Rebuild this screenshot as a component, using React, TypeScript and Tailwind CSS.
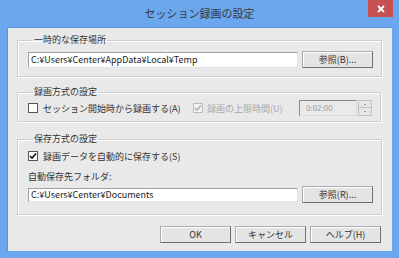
const font = { fontFamily: '"Noto Sans CJK JP", "Noto Sans", sans-serif' }

function Button({ label, className = "" }: { label: string; className?: string }) {
  return (
    <button
      className={`h-[17px] w-[71px] shrink-0 bg-[#e4e4e4] border border-[#adadad] border-r-[#707070] border-b-[#707070] shadow-[inset_1px_1px_0_#fff] text-[9px] leading-none text-[#333] flex items-center justify-center ${className}`}
    >
      {label}
    </button>
  )
}

function CheckBox({ checked, disabled }: { checked?: boolean; disabled?: boolean }) {
  return (
    <span
      className={`w-[10px] h-[10px] shrink-0 border flex items-center justify-center ${
        disabled ? "border-[#bcbcbc] bg-[#f4f4f4]" : "border-[#555] bg-white"
      }`}
    >
      {checked && (
        <svg width="8" height="8" viewBox="0 0 8 8">
          <path
            d="M1 4 L3 6 L7 1.5"
            fill="none"
            stroke={disabled ? "#b0b0b0" : "#111"}
            strokeWidth="1.6"
          />
        </svg>
      )}
    </span>
  )
}

function Group({ title, className = "", children }: { title: string; className?: string; children: React.ReactNode }) {
  return (
    <fieldset
      className={`mx-0 ml-[9px] mr-[11px] border border-[#cdcdcd] shadow-[inset_1px_1px_0_#fff,1px_1px_0_#fff] px-0 pl-[10px] pr-[8px] ${className}`}
    >
      <legend className="ml-[5px] px-[1px] text-[9px] leading-[12px] text-[#333]">{title}</legend>
      {children}
    </fieldset>
  )
}

function Field({ value, className = "" }: { value: string; className?: string }) {
  return (
    <div
      className={`w-[270px] bg-white border border-[#a0a0a0] border-r-[#e3e3e3] border-b-[#e3e3e3] text-[9px] leading-none text-[#222] flex items-center pl-[2px] ${className}`}
    >
      {value}
    </div>
  )
}

export default function App() {
  return (
    <div className="w-[399px] h-[258px] bg-[#6ba7ee] flex flex-col relative overflow-hidden" style={font}>
      {/* Title bar */}
      <div className="h-[27px] shrink-0 flex items-center justify-center pb-[1px]">
        <span className="text-[11px] text-[#3a3a3a] leading-none">セッション録画の設定</span>
      </div>
      <div className="absolute top-0 right-[6px] w-[25px] h-[17px] bg-[#c75050] flex items-center justify-center">
        <svg width="8" height="8" viewBox="0 0 8 8">
          <path d="M1 1 L7 7 M7 1 L1 7" stroke="#fff" strokeWidth="1.8" />
        </svg>
      </div>

      {/* Client area */}
      <div className="mx-[7px] h-[224px] bg-[#e9e9e9] border-l border-t border-[#5b93dc] flex flex-col">
        <Group title="一時的な保存場所" className="mt-[6px] pt-[5px] pb-[8px]">
          <div className="flex items-center gap-[4px]">
            <Field value="C:¥Users¥Center¥AppData¥Local¥Temp" className="h-[16px]" />
            <Button label="参照(B)..." />
          </div>
        </Group>

        <Group title="録画方式の設定" className="mt-[9px] pt-[2px] pb-[5px]">
          <div className="flex items-center h-[16px]">
            <div className="flex items-center gap-[5px] w-[165px] text-[9px] leading-none text-[#333]">
              <CheckBox />
              <span className="whitespace-nowrap">セッション開始時から録画する(A)</span>
            </div>
            <div className="flex items-center gap-[4px] text-[9px] leading-none text-[#aaaaaa]">
              <CheckBox checked disabled />
              <span className="whitespace-nowrap">録画の上限時間(U)</span>
            </div>
            <div className="ml-auto flex items-center">
              <div className="w-[58px] h-[16px] border border-[#8a8a8a] border-r-[#dcdcdc] border-b-[#dcdcdc] bg-[#eaeaea] text-[8px] leading-none text-[#9a9a9a] flex items-center pl-[6px]">
                0:02:00
              </div>
              <div className="flex flex-col w-[14px] h-[16px] ml-[1px]">
                <div className="h-[8px] bg-[#e6e6e6] border border-[#c4c4c4] flex items-center justify-center">
                  <span className="w-[2px] h-[1px] bg-[#a0a0a0]" />
                </div>
                <div className="h-[8px] bg-[#e6e6e6] border border-[#c4c4c4] border-t-0 flex items-center justify-center">
                  <span className="w-[2px] h-[1px] bg-[#a0a0a0]" />
                </div>
              </div>
            </div>
          </div>
        </Group>

        <Group title="保存方式の設定" className="mt-[11px] pt-[5px] pb-[11px]">
          <div className="flex items-center gap-[5px] h-[12px] text-[9px] leading-none text-[#333]">
            <CheckBox checked />
            <span>録画データを自動的に保存する(S)</span>
          </div>
          <div className="mt-[8px] h-[12px] flex items-center text-[9px] leading-none text-[#333]">
            自動保存先フォルダ:
          </div>
          <div className="mt-[4px] flex items-center gap-[4px]">
            <Field value="C:¥Users¥Center¥Documents" className="h-[14px]" />
            <Button label="参照(R)..." />
          </div>
        </Group>

        <div className="mt-[11px] mr-[11px] flex justify-end gap-[4px]">
          <Button label="OK" className="w-[70px]" />
          <Button label="キャンセル" className="w-[70px]" />
          <Button label="ヘルプ(H)" className="w-[71px]" />
        </div>
      </div>
    </div>
  )
}
